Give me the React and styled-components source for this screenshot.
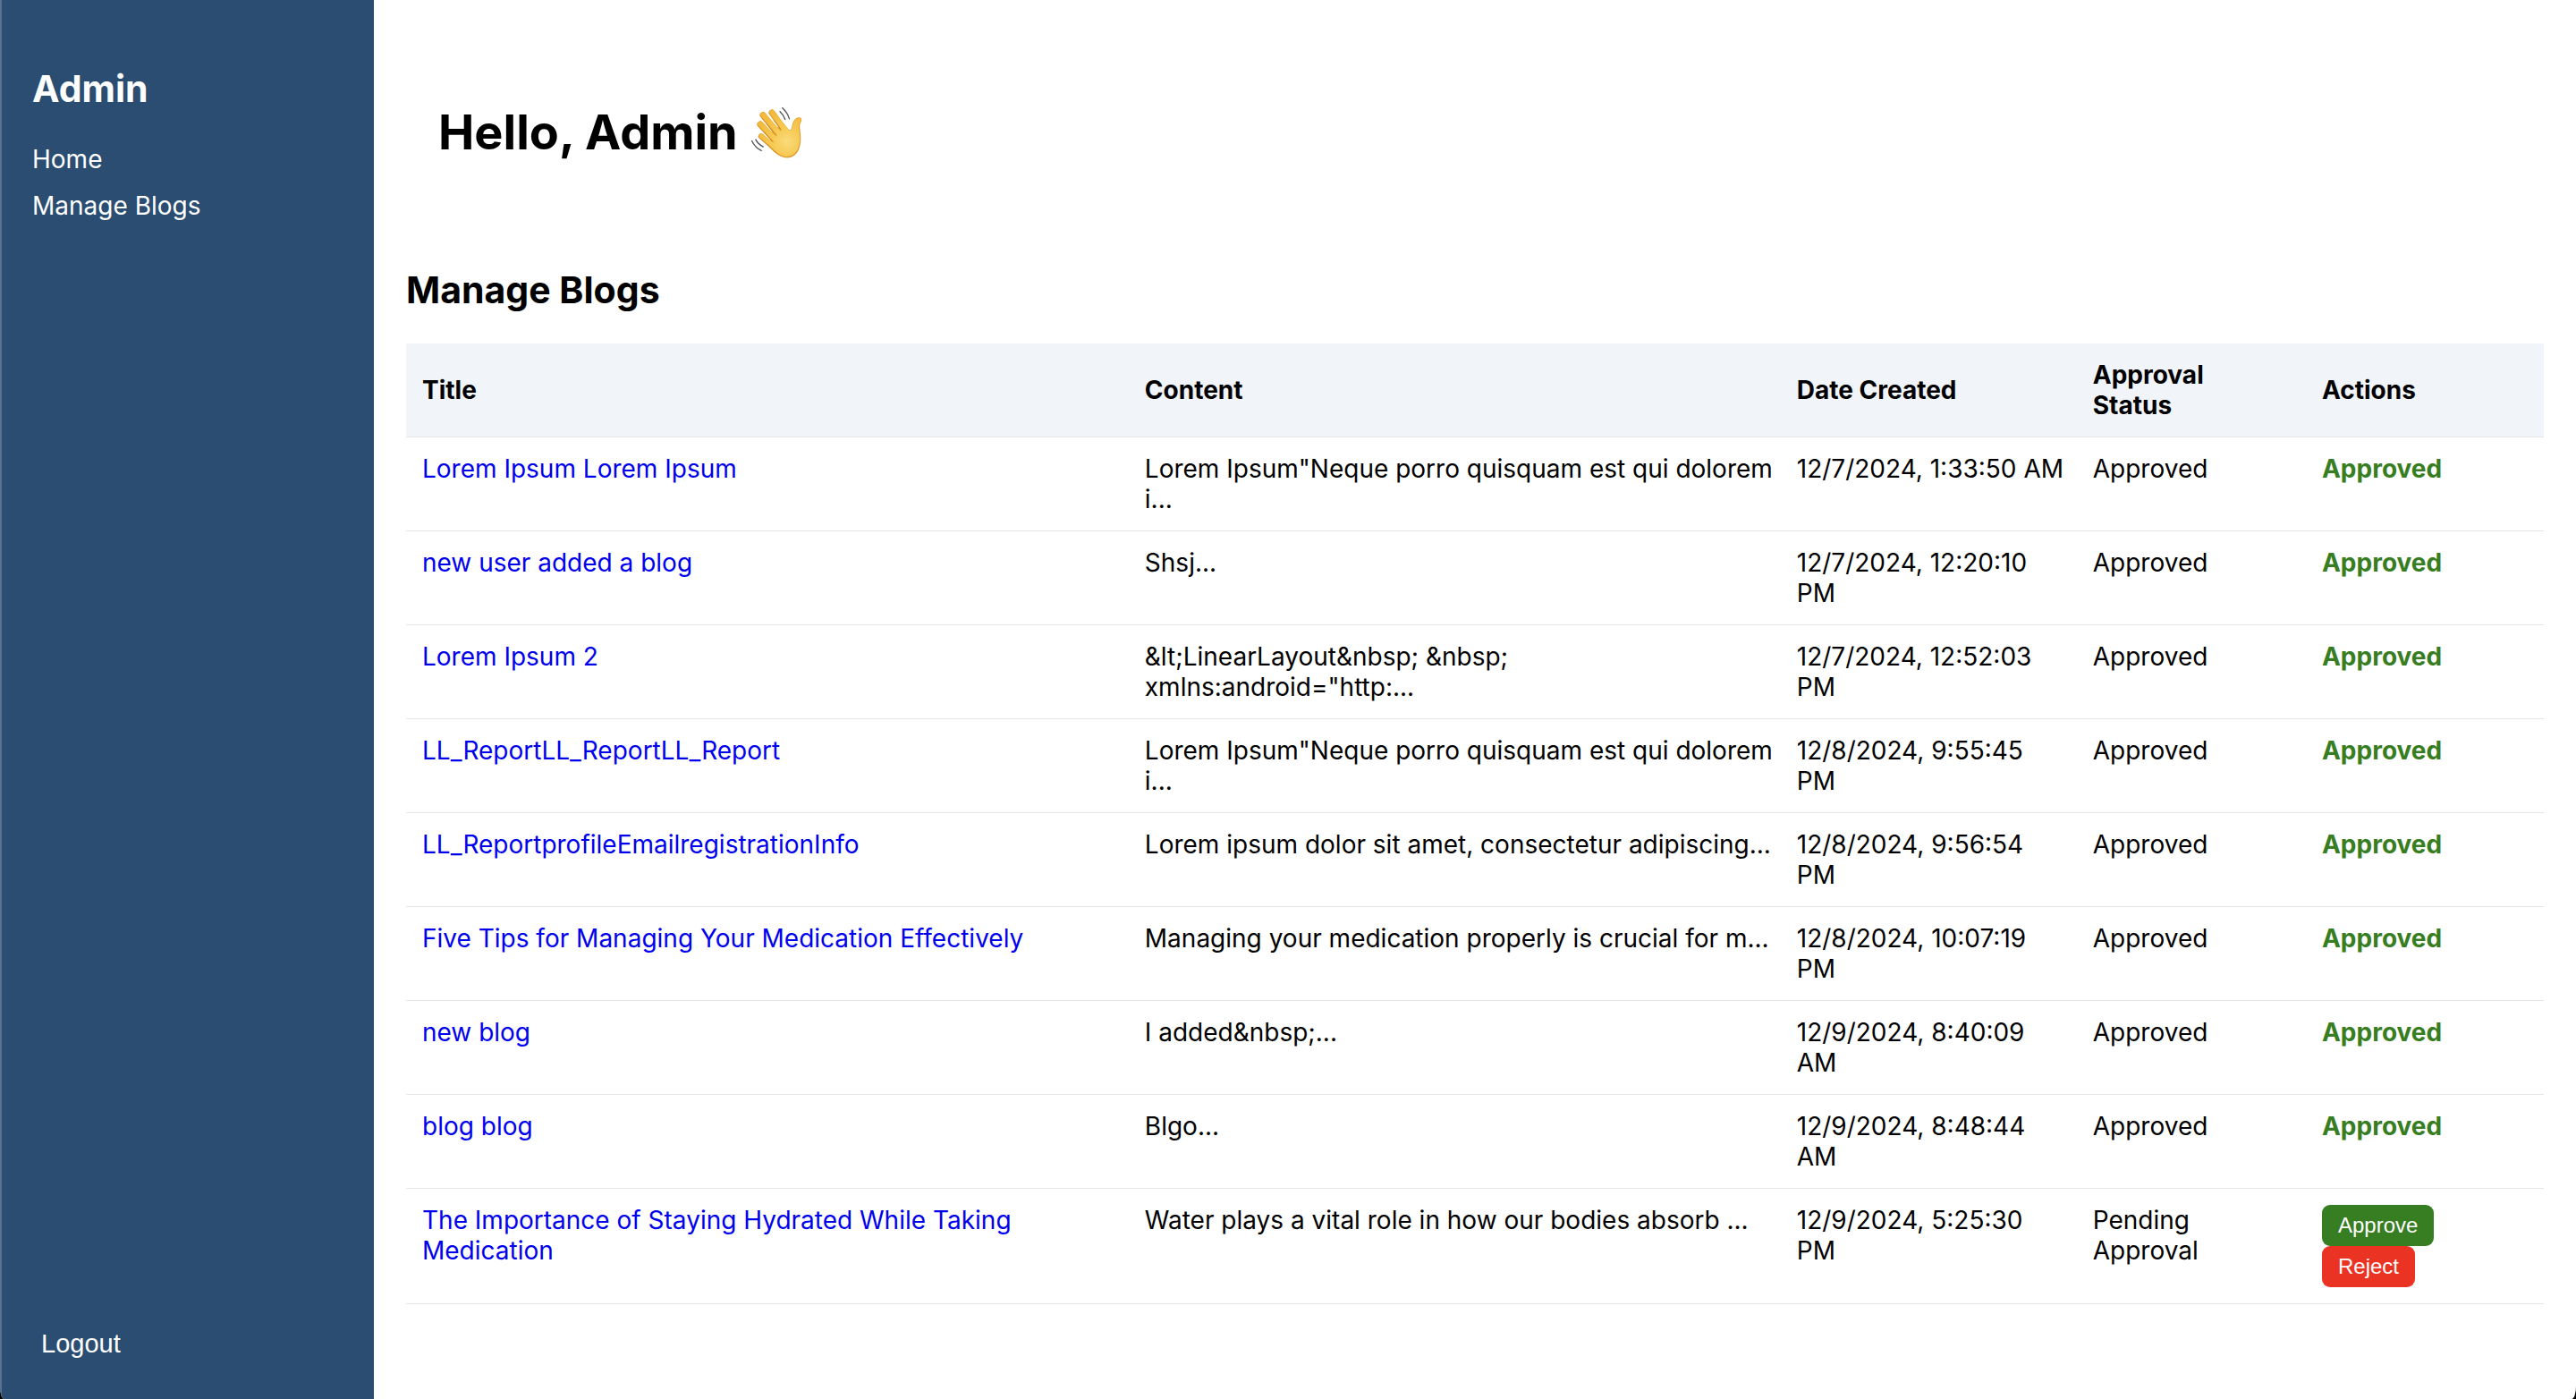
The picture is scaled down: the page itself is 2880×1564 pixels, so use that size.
import React from "react";
import styled, { createGlobalStyle } from "styled-components";

const GlobalStyle = createGlobalStyle`
  body {
    margin: 0;
    background: #000;
  }
  *, *::before, *::after {
    box-sizing: border-box;
  }
`;

const Layout = styled.div`
  display: flex;
  min-height: 100vh;
  overflow: hidden;
  background: #fff;
  color: #000;
  border-radius: 0 0 5px 5px / 0 0 14px 14px;
  font-family: Inter, Roboto, "Liberation Sans", sans-serif;
  font-size: 28px;
  line-height: 34px;
`;

const Sidebar = styled.aside`
  display: flex;
  flex: 0 0 418px;
  flex-direction: column;
  justify-content: space-between;
  padding: 73px 36px 36px 34px;
  border-left: 2px solid #58718f;
  background: #2a4d71;
  color: #fff;
`;

const SidebarTitle = styled.h2`
  margin: 0 0 36px;
  font-size: 41px;
  line-height: 52px;
  font-weight: 700;
`;

const NavList = styled.ul`
  display: grid;
  gap: 18px;
  margin: 0;
  padding: 0;
  list-style: none;
`;

const NavLink = styled.a`
  color: inherit;
  text-decoration: none;
`;

const LogoutButton = styled.button`
  align-self: flex-start;
  padding: 9px 10px;
  border: 0;
  background: none;
  color: inherit;
  font-family: "Liberation Sans", Arial, sans-serif;
  font-size: 29px;
  line-height: 34px;
  cursor: pointer;
`;

const Main = styled.main`
  flex: 1;
  min-width: 0;
  padding: 36px;
`;

const Greeting = styled.h1`
  display: flex;
  align-items: center;
  gap: 14px;
  margin: 0;
  padding: 78px 36px 116px;
  font-size: 54px;
  line-height: 68px;
  font-weight: 700;
`;

const SectionTitle = styled.h2`
  margin: 0 0 34px;
  font-size: 41px;
  line-height: 52px;
  font-weight: 700;
`;

const Table = styled.table`
  width: 100%;
  table-layout: fixed;
  border-collapse: separate;
  border-spacing: 0;
`;

const Column = styled.col`
  width: ${({ $share }) => $share}%;
`;

const HeadCell = styled.th`
  padding: 18px;
  border-bottom: 1px solid #e6e6e6;
  background: #f1f5fa;
  font-weight: 700;
  text-align: left;
  vertical-align: middle;
  white-space: pre-line;
`;

const Cell = styled.td`
  padding: 18px 4px 18px 18px;
  border-bottom: 1px solid #e6e6e6;
  vertical-align: top;
  white-space: pre-line;
`;

const BlogLink = styled.a`
  color: #0000ee;
  text-decoration: none;
`;

const ApprovedLabel = styled.span`
  color: #377d22;
  font-weight: 700;
`;

const ActionList = styled.div`
  display: flex;
  flex-direction: column;
  align-items: flex-start;
`;

const ActionButton = styled.button`
  padding: 9px 18px;
  border: 0;
  border-radius: 9px;
  background: ${({ $danger }) => ($danger ? "#eb3323" : "#377d22")};
  color: #fff;
  font-family: "Liberation Sans", Arial, sans-serif;
  font-size: 24px;
  line-height: 28px;
  cursor: pointer;
`;

const HandSvg = styled.svg`
  flex: none;
  width: 58px;
  height: 58px;
`;

function WavingHand() {
  return (
    <HandSvg viewBox="50 83 174 174" role="img" aria-label="waving hand">
      <defs>
        <radialGradient id="palm" gradientUnits="userSpaceOnUse" cx="172" cy="200" r="100">
          <stop offset="0" stopColor="#fadb7c" />
          <stop offset="0.45" stopColor="#f6cb55" />
          <stop offset="1" stopColor="#f3bb3c" />
        </radialGradient>
      </defs>
      <g fill="none" stroke="#d9912a" strokeLinecap="round">
        <path d="M122 104L164 162" strokeWidth="21" />
        <path d="M92 112L150 182" strokeWidth="21" />
        <path d="M83 143L140 204" strokeWidth="21" />
        <path d="M86 183L140 230" strokeWidth="19" />
      </g>
      <path
        d="M118 170L160 138L178 160C184 166 187 160 189 151C192 133 200 120 212 120C221 120 224 127 220 134C214 142 215 153 217 166C220 188 220 210 211 230C200 251 183 257 167 255C148 253 134 240 115 222Z"
        fill="#e09a2e"
      />
      <g fill="none" stroke="url(#palm)" strokeLinecap="round">
        <path d="M123 103L168 164" strokeWidth="18" />
        <path d="M93 111L154 182" strokeWidth="18" />
        <path d="M84 142L144 204" strokeWidth="18" />
        <path d="M87 182L144 229" strokeWidth="16" />
      </g>
      <path
        d="M132 188L152 164L168 150L178 162C185 168 189 161 191 152C194 134 201 122 212 122C219 122 221 128 218 133C211 142 212 153 214 167C217 188 217 208 208 228C198 247 182 252 168 251C151 249 139 238 120 221Z"
        fill="url(#palm)"
      />
      <g fill="none" stroke="#d58a28" strokeWidth="3" strokeLinecap="round">
        <path d="M131 131L150 157" />
        <path d="M105 142L131 176" />
        <path d="M97 171L124 200" />
      </g>
      <g fill="none" stroke="#505256" strokeWidth="4">
        <path d="M156 87Q174 103 181 126" />
        <path d="M148 99Q161 111 167 128" />
        <path d="M54 197Q66 222 88 232" />
        <path d="M67 193Q76 211 94 219" />
      </g>
    </HandSvg>
  );
}

const columns = [
  { label: "Title", share: 33.8 },
  { label: "Content", share: 30.5 },
  { label: "Date Created", share: 13.85 },
  { label: "Approval\nStatus", share: 10.72 },
  { label: "Actions", share: 11.13 },
];

const blogs = [
  {
    title: "Lorem Ipsum Lorem Ipsum",
    content: 'Lorem Ipsum"Neque porro quisquam est qui dolorem\ni...',
    created: "12/7/2024, 1:33:50 AM",
    approved: true,
  },
  { title: "new user added a blog", content: "Shsj...", created: "12/7/2024, 12:20:10\nPM", approved: true },
  {
    title: "Lorem Ipsum 2",
    content: '&lt;LinearLayout&nbsp; &nbsp;\nxmlns:android="http:...',
    created: "12/7/2024, 12:52:03\nPM",
    approved: true,
  },
  {
    title: "LL_ReportLL_ReportLL_Report",
    content: 'Lorem Ipsum"Neque porro quisquam est qui dolorem\ni...',
    created: "12/8/2024, 9:55:45\nPM",
    approved: true,
  },
  {
    title: "LL_ReportprofileEmailregistrationInfo",
    content: "Lorem ipsum dolor sit amet, consectetur adipiscing...",
    created: "12/8/2024, 9:56:54\nPM",
    approved: true,
  },
  {
    title: "Five Tips for Managing Your Medication Effectively",
    content: "Managing your medication properly is crucial for m...",
    created: "12/8/2024, 10:07:19\nPM",
    approved: true,
  },
  { title: "new blog", content: "I added&nbsp;...", created: "12/9/2024, 8:40:09\nAM", approved: true },
  { title: "blog blog", content: "Blgo...", created: "12/9/2024, 8:48:44\nAM", approved: true },
  {
    title: "The Importance of Staying Hydrated While Taking\nMedication",
    content: "Water plays a vital role in how our bodies absorb ...",
    created: "12/9/2024, 5:25:30\nPM",
    approved: false,
  },
];

function BlogRow({ blog }) {
  return (
    <tr>
      <Cell>
        <BlogLink href="#blog">{blog.title}</BlogLink>
      </Cell>
      <Cell>{blog.content}</Cell>
      <Cell>{blog.created}</Cell>
      <Cell>{blog.approved ? "Approved" : "Pending\nApproval"}</Cell>
      <Cell>
        {blog.approved ? (
          <ApprovedLabel>Approved</ApprovedLabel>
        ) : (
          <ActionList>
            <ActionButton type="button">Approve</ActionButton>
            <ActionButton type="button" $danger>
              Reject
            </ActionButton>
          </ActionList>
        )}
      </Cell>
    </tr>
  );
}

export default function App() {
  return (
    <>
      <GlobalStyle />
      <Layout>
        <Sidebar>
          <nav>
            <SidebarTitle>Admin</SidebarTitle>
            <NavList>
              <li>
                <NavLink href="#home">Home</NavLink>
              </li>
              <li>
                <NavLink href="#manage">Manage Blogs</NavLink>
              </li>
            </NavList>
          </nav>
          <LogoutButton type="button">Logout</LogoutButton>
        </Sidebar>
        <Main>
          <Greeting>
            Hello, Admin
            <WavingHand />
          </Greeting>
          <SectionTitle>Manage Blogs</SectionTitle>
          <Table>
            <colgroup>
              {columns.map((column) => (
                <Column key={column.label} $share={column.share} />
              ))}
            </colgroup>
            <thead>
              <tr>
                {columns.map((column) => (
                  <HeadCell key={column.label} scope="col">
                    {column.label}
                  </HeadCell>
                ))}
              </tr>
            </thead>
            <tbody>
              {blogs.map((blog) => (
                <BlogRow key={blog.title} blog={blog} />
              ))}
            </tbody>
          </Table>
        </Main>
      </Layout>
    </>
  );
}
